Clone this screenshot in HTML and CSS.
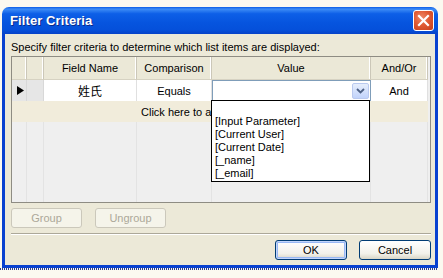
FILE: index.html
```html
<!DOCTYPE html>
<html>
<head>
<meta charset="utf-8">
<link rel="stylesheet" href="styles.css">
</head>
<body>
<div class="window">
  <div class="titlebar">
    <span class="title">Filter Criteria</span>
    <span class="close"><svg width="13" height="13" viewBox="0 0 13 13"><path d="M2 2 L11 11 M11 2 L2 11" stroke="#fff" stroke-width="2.2" stroke-linecap="square"/></svg></span>
  </div>
  <div class="client">
    <div class="label">Specify filter criteria to determine which list items are displayed:</div>
    <div class="grid">
      <div class="table">
        <div class="hd"></div><div class="hd"></div><div class="hd">Field Name</div><div class="hd">Comparison</div><div class="hd">Value</div><div class="hd">And/Or</div>
        <div class="rh"><svg width="7" height="9" viewBox="0 0 7 9"><path d="M0 0 L7 4.5 L0 9 Z" fill="#000"/></svg></div>
        <div class="rh"></div>
        <div class="cell white cjk">姓氏</div>
        <div class="cell white">Equals</div>
        <div class="cell white combo-cell"><div class="combo"><span class="dd"><svg width="9" height="6" viewBox="0 0 9 6"><path d="M1 1 L4.5 4.5 L8 1" stroke="#4d6185" stroke-width="1.8" fill="none"/></svg></span></div></div>
        <div class="cell white">And</div>
        <div class="addrow"><span class="addtext">Click here to add a new filter</span></div>
        <div class="fill"></div><div class="fill"></div><div class="fill"></div><div class="fill"></div><div class="fill"></div><div class="fill"></div>
      </div>
      <div class="dropdown">
        <div class="item"></div>
        <div class="item">[Input Parameter]</div>
        <div class="item">[Current User]</div>
        <div class="item">[Current Date]</div>
        <div class="item">[_name]</div>
        <div class="item">[_email]</div>
      </div>
    </div>
    <div class="btnrow">
      <span class="btn disabled">Group</span>
      <span class="btn disabled">Ungroup</span>
    </div>
    <div class="sep"></div>
    <div class="okrow">
      <span class="btn default">OK</span>
      <span class="btn">Cancel</span>
    </div>
  </div>
</div>
<div class="dots"></div>
</body>
</html>
```
FILE: styles.css
```css
html, body { margin: 0; padding: 0; }
body {
  width: 443px; height: 278px; overflow: hidden;
  background: #fbf9f0;
  font-family: "Liberation Sans", Arial, sans-serif;
  font-size: 11px; color: #000;
}
.window { margin: 7px 0 0 2px; width: 436px; }
.titlebar {
  height: 27px; box-sizing: border-box;
  border-radius: 7px 7px 0 0;
  background: linear-gradient(#0a5ce6 0%, #3d8cf6 8%, #0d5fe7 25%, #0654de 60%, #0550da 85%, #0642c8 100%);
  display: flex; align-items: center; justify-content: space-between;
  padding: 0 4px 0 8px;
}
.title { color: #fff; font-weight: bold; font-size: 13px; text-shadow: 1px 1px 0 #0b2b8a; letter-spacing: 0.1px; }
.close {
  width: 19px; height: 19px; border: 1px solid #fff; border-radius: 3px;
  background: radial-gradient(circle at 40% 35%, #ee8a6a 0%, #e05a34 45%, #c73f1b 100%);
  display: flex; align-items: center; justify-content: center;
}
.client {
  background: #ece9d8;
  border: 3px solid #0841d0; border-top: 0;
  padding: 6px 4px 5px 6px;
}
.label { height: 14px; line-height: 14px; }
.grid {
  position: relative; margin-top: 2px;
  width: 420px; height: 147px; box-sizing: border-box;
  border: 1px solid #8e8c83;
  background: #efefef;
}
.table {
  display: grid;
  grid-template-columns: 15px 17px 93px 75px 159px 57px;
  grid-template-rows: 23px 21px 21px 80px;
}
.hd {
  background: #ebe8d7;
  border-right: 1px solid #cbc7b8; border-bottom: 1px solid #d6d2c2;
  box-shadow: inset -1px 0 0 #fff;
  display: flex; align-items: center; justify-content: center;
}
.rh { background: #e6e6e6; border-right: 1px solid #d8d8d8; display: flex; align-items: center; padding-left: 5px; }
.rh + .rh { padding-left: 0; }
.cell { display: flex; align-items: center; justify-content: center; border-right: 1px solid #e0e0e0; }
.white { background: #fff; }
.cjk { font-family: "Noto Sans CJK SC", "Liberation Sans", sans-serif; font-size: 12px; }
.combo-cell { align-items: stretch; justify-content: stretch; border-right: 0; }
.combo {
  flex: 1; border: 1px solid #7f9db9; background: #fff;
  display: flex; justify-content: flex-end; align-items: center; padding-right: 1px;
}
.dd {
  width: 17px; height: 16px; box-sizing: border-box;
  border: 1px solid #b9c9ef; border-radius: 2px;
  background: linear-gradient(#e6eefc, #c1d3fb);
  display: flex; align-items: center; justify-content: center;
}
.addrow {
  grid-column: 1 / 7; background: #f1ecdb;
  padding-left: 129px; display: flex; align-items: center;
}
.addtext { width: 70px; overflow: hidden; white-space: nowrap; }
.fill { border-right: 1px solid #e3e3e3; }
.dropdown {
  position: absolute; left: 199px; top: 43px;
  width: 159px; height: 82px; box-sizing: border-box;
  border: 1px solid #000; background: #fff;
  padding: 0 0 0 3px;
}
.item { height: 13px; line-height: 13px; font-size: 11px; }
.item:first-child { height: 14px; }
.btnrow { display: flex; gap: 13px; margin-top: 5px; }
.btn {
  width: 72px; height: 20px; box-sizing: border-box;
  border: 1px solid #003c74; border-radius: 3px;
  background: linear-gradient(#ffffff, #f2f1ea 70%, #d8d5c6);
  display: flex; align-items: center; justify-content: center;
  font-size: 11px;
}
.btn.disabled {
  width: 71px; border-color: #cbc8bb; color: #aca899; background: #f5f4ea;
}
.btn.default { box-shadow: inset 0 0 0 1px #c2d5fb, inset 0 0 0 2px #98b8f4; }
.sep { margin-top: 5px; width: 420px; height: 1px; border-bottom: 1px solid #fff; background: #aca899; }
.okrow { display: flex; justify-content: flex-end; gap: 12px; margin-top: 5px; padding-right: 0px; }
.okrow .btn { width: 72px; }
.dots {
  margin-left: 0; width: 438px; height: 2px;
  background: repeating-linear-gradient(90deg, #2c3f8f 0 1px, transparent 1px 2px);
}
```
